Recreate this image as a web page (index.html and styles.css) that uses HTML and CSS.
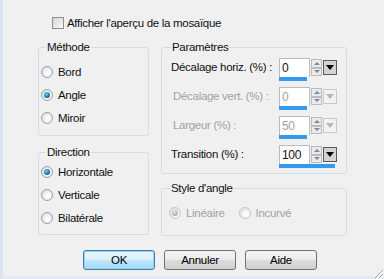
FILE: index.html
```html
<!DOCTYPE html>
<html lang="fr">
<head>
    <meta charset="UTF-8">
    <title>Mosaïque</title>
    <link rel="stylesheet" href="styles.css">
</head>
<body>
    <div class="dialog">
        <label class="check-row">
            <span class="checkbox"></span>
            Afficher l'aperçu de la mosaïque
        </label>

        <div class="columns">
            <div class="col-left">
                <fieldset class="group methode">
                    <legend>Méthode</legend>
                    <div class="opt"><span class="radio"></span>Bord</div>
                    <div class="opt"><span class="radio on"></span>Angle</div>
                    <div class="opt"><span class="radio"></span>Miroir</div>
                </fieldset>
                <fieldset class="group direction">
                    <legend>Direction</legend>
                    <div class="opt"><span class="radio on"></span>Horizontale</div>
                    <div class="opt"><span class="radio"></span>Verticale</div>
                    <div class="opt"><span class="radio"></span>Bilatérale</div>
                </fieldset>
            </div>

            <div class="col-right">
                <fieldset class="group params">
                    <legend>Paramètres</legend>
                    <div class="spin-row">
                        <span class="lbl">Décalage horiz. (%) :</span>
                        <div class="spin">
                            <span class="field">0</span>
                            <span class="arrows"><i class="up"></i><i class="down"></i></span>
                            <span class="drop"></span>
                            <span class="bar"></span>
                        </div>
                    </div>
                    <div class="spin-row off">
                        <span class="lbl">Décalage vert. (%) :</span>
                        <div class="spin">
                            <span class="field">0</span>
                            <span class="arrows"><i class="up"></i><i class="down"></i></span>
                            <span class="drop"></span>
                            <span class="bar"></span>
                        </div>
                    </div>
                    <div class="spin-row off">
                        <span class="lbl">Largeur (%) :</span>
                        <div class="spin">
                            <span class="field">50</span>
                            <span class="arrows"><i class="up"></i><i class="down"></i></span>
                            <span class="drop"></span>
                            <span class="bar"></span>
                        </div>
                    </div>
                    <div class="spin-row last">
                        <span class="lbl">Transition (%) :</span>
                        <div class="spin">
                            <span class="field">100</span>
                            <span class="arrows"><i class="up"></i><i class="down"></i></span>
                            <span class="drop"></span>
                            <span class="bar full"></span>
                        </div>
                    </div>
                </fieldset>
                <fieldset class="group style">
                    <legend>Style d'angle</legend>
                    <div class="inline-opts">
                        <div class="opt off"><span class="radio on"></span>Linéaire</div>
                        <div class="opt off"><span class="radio"></span>Incurvé</div>
                    </div>
                </fieldset>
            </div>
        </div>

        <div class="buttons">
            <button class="default">OK</button>
            <button>Annuler</button>
            <button>Aide</button>
        </div>
    </div>
    <svg class="grip" width="12" height="12" viewBox="0 0 12 12">
        <path d="M11 3 L3 11 M11 7 L7 11" stroke="#9aa3ad" stroke-width="1"/>
        <path d="M12 4 L4 12 M12 8 L8 12" stroke="#ffffff" stroke-width="1"/>
    </svg>
</body>
</html>
```

FILE: styles.css
```css
body {
    margin: 0;
    width: 384px;
    height: 279px;
    overflow: hidden;
    background: #f0f0f0;
    font-family: "Liberation Sans", Arial, sans-serif;
    font-size: 11.5px;
    letter-spacing: -0.3px;
    color: #111;
    position: relative;
}
.dialog {
    height: 276px;
    border-left: 3px solid #dbe4ee;
    border-bottom: 3px solid #e2eaf3;
}
.check-row {
    display: flex;
    align-items: center;
    gap: 3px;
    height: 15px;
    padding: 15px 0 0 49px;
}
.checkbox {
    width: 10px;
    height: 10px;
    border: 1px solid #8f8f8f;
    background: linear-gradient(135deg, #d4d4d4, #fafafa);
}
.columns {
    display: flex;
    gap: 12px;
    margin: 10px 0 0 35px;
}
.col-left {
    width: 111px;
    display: flex;
    flex-direction: column;
    gap: 9px;
}
.col-right {
    width: 186px;
    display: flex;
    flex-direction: column;
    gap: 7px;
}
.group {
    margin: 0;
    padding: 0 0 0 2px;
    border: 1px solid #d5dde4;
    border-radius: 3px;
    box-sizing: border-box;
    min-width: 0;
}
.group legend {
    margin-left: 5px;
    padding: 0 1px;
    line-height: 15px;
}
.params legend { margin-left: 0; }
.style legend { margin-left: 1px; }
.methode { height: 96px; padding-top: 5px; }
.direction { height: 90px; }
.params { height: 134px; padding: 3px 0 0 9px; }
.style { height: 55px; padding: 5px 0 0 7px; }

.opt {
    display: flex;
    align-items: center;
    gap: 5px;
    height: 23px;
    white-space: nowrap;
}
.opt.off { color: #a2a2a2; }
.radio {
    width: 10px;
    height: 10px;
    border: 1px solid #9aa1a8;
    border-radius: 50%;
    background: radial-gradient(circle at 60% 60%, #fdfdfd 20%, #d8d8d8 90%);
    position: relative;
    flex-shrink: 0;
}
.radio.on::after {
    content: "";
    position: absolute;
    left: 2px;
    top: 2px;
    width: 6px;
    height: 6px;
    border-radius: 50%;
    background: radial-gradient(circle at 40% 35%, #7ad0f0, #1b6fa3 60%, #0f3f66);
}
.opt.off .radio { border-color: #c4c8cc; }
.opt.off .radio.on::after {
    background: radial-gradient(circle at 40% 35%, #e8e8e8, #a8a8a8 70%);
}
.inline-opts {
    display: flex;
    gap: 14px;
}

.spin-row {
    display: flex;
    align-items: flex-start;
    height: 23px;
    margin-bottom: 6px;
}
.spin-row.last { margin-top: 2px; }
.spin-row .lbl {
    width: 108px;
    flex-shrink: 0;
    white-space: nowrap;
    line-height: 19px;
}
.spin-row.off .lbl { color: #a2a2a2; padding-left: 2px; width: 106px; }
.spin {
    display: grid;
    grid-template-columns: 31px 11px 14px;
    grid-template-rows: 19px 4px;
    column-gap: 1px;
    align-items: center;
}
.field {
    height: 19px;
    box-sizing: border-box;
    border: 1px solid #b5bcc4;
    border-bottom: none;
    background: #fff;
    padding-left: 2px;
    line-height: 18px;
    font-size: 12px;
}
.spin-row.off .field { color: #a2a2a2; }
.arrows {
    display: flex;
    flex-direction: column;
    height: 17px;
}
.arrows i {
    flex: 1;
    border: 1px solid #bcbcbc;
    background: #eaeaea;
    position: relative;
}
.arrows i::after {
    content: "";
    position: absolute;
    left: 2px;
    border-left: 3px solid transparent;
    border-right: 3px solid transparent;
}
.arrows .up::after { top: 2px; border-bottom: 3px solid #7f8a96; }
.arrows .down::after { top: 1px; border-top: 3px solid #7f8a96; }
.drop {
    height: 15px;
    box-sizing: border-box;
    border: 1px solid #5a5a5a;
    background: #d3d3d3;
    position: relative;
}
.drop::after {
    content: "";
    position: absolute;
    left: 2px;
    top: 4px;
    border-left: 4px solid transparent;
    border-right: 4px solid transparent;
    border-top: 5px solid #000;
}
.spin-row.off .drop { border-color: #c8c8c8; background: #f2f2f2; }
.spin-row.off .drop::after { border-top-color: #b8b8b8; }
.bar {
    grid-column: 1 / 3;
    height: 4px;
    width: 28px;
    background: #3399ee;
    align-self: start;
}
.bar.full { grid-column: 1 / 4; width: 56px; }

.buttons {
    display: flex;
    gap: 9px;
    margin: 14px 0 0 80px;
}
button {
    width: 72px;
    height: 20px;
    padding: 0;
    font-family: inherit;
    font-size: 11.5px;
    letter-spacing: -0.3px;
    color: #000;
    border: 1px solid #707070;
    border-radius: 3px;
    background: linear-gradient(#f4f4f4, #ebebeb 50%, #dcdcdc 51%, #d0d0d0);
}
button.default {
    border-color: #3c7fb1;
    box-shadow: inset 0 0 0 1px #98d1ef;
    background: linear-gradient(#eaf6fd, #d9f0fc 50%, #bee6fd 51%, #a7d9f5);
}
.grip {
    position: absolute;
    right: 0;
    bottom: 0;
}
```
